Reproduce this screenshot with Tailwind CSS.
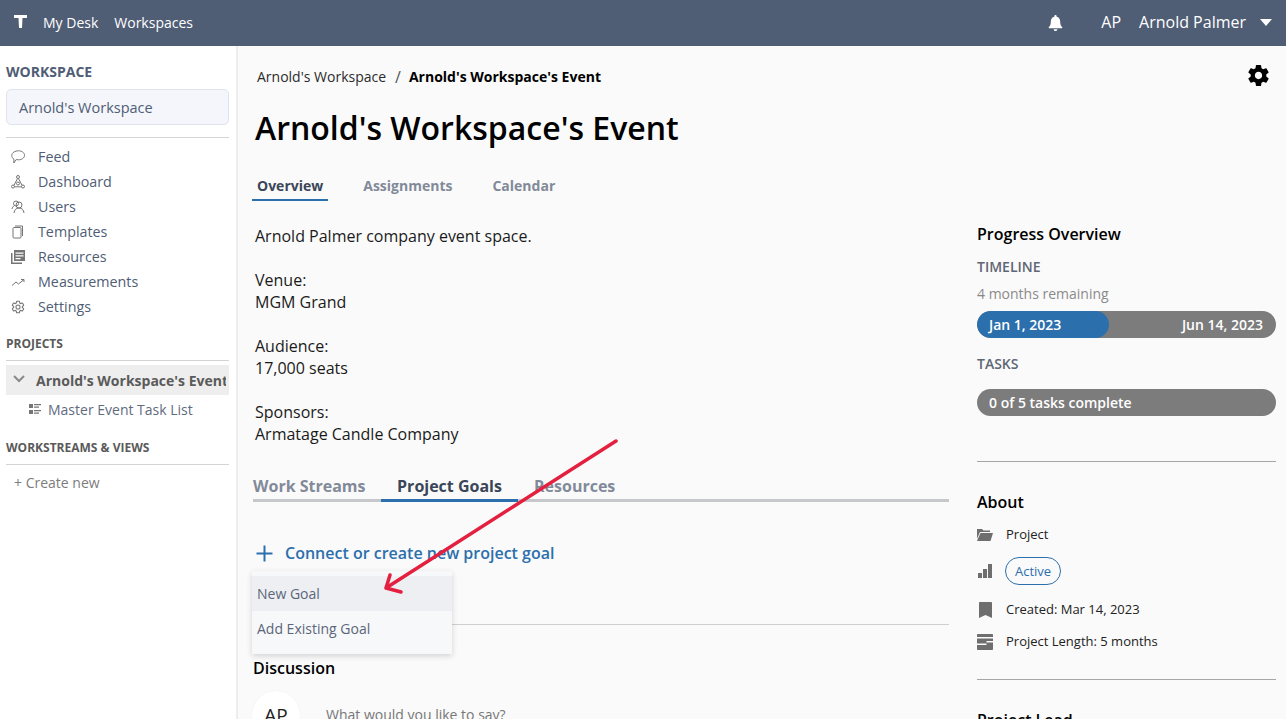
<!doctype html>
<html>
<head>
<meta charset="utf-8">
<title>Arnold's Workspace's Event</title>
<script src="https://cdn.jsdelivr.net/npm/@tailwindcss/browser@4"></script>
</head>
<body class="h-[719px] overflow-hidden bg-[#fafafa] font-['Open_Sans',sans-serif] relative">
    <!-- Top bar -->
    <header class="h-[46px] pb-[2px] bg-[#4f5d75] flex items-center text-white text-[14px]">
        <svg class="ml-[14px] mr-[16px] mt-[-1px]" width="13" height="13" viewBox="0 0 13 13" fill="#fff"><path d="M0 0h13v3H8.500l-.5 10H5L4.500 3H0z"/></svg>
        <a class="mr-4">My Desk</a>
        <a>Workspaces</a>
        <svg class="ml-auto mt-[2px]" width="15" height="17" viewBox="0 0 16 18" fill="#fff"><path d="M8 0c-.7 0-1.200.5-1.200 1.200v.6C4.300 2.300 3 4.300 3 6.800c0 3.600-1 4.800-2.200 6.200-.3.400 0 1 .5 1h13.400c.5 0 .8-.6.500-1C14 11.600 13 10.400 13 6.800c0-2.500-1.300-4.500-3.800-5v-.6C9.200.500 8.700 0 8 0zM6 15c0 1.100.9 2 2 2s2-.9 2-2z"/></svg>
        <span class="ml-[38px] text-[16px]">AP</span>
        <span class="ml-[18px] text-[16px]">Arnold Palmer</span>
        <svg class="ml-[14px] mr-[14px]" width="12" height="7" viewBox="0 0 14 8" fill="#fff"><path d="M0 0h14L7 8z"/></svg>
    </header>

    <div class="flex h-[673px]">
        <!-- Sidebar -->
        <aside class="w-[238px] shrink-0 bg-white border-r-2 border-[#eeeeee] pl-[6px] pr-[7px] text-[14.3px] text-[#4f5d75]">
            <div class="mt-[16px] text-[14px] leading-[19px] font-bold">WORKSPACE</div>
            <div class="mt-[8px] h-[36px] pt-[1px] border border-[#dfe3f0] bg-[#f5f6fb] rounded-[5px] pl-[12px] flex items-center text-[14.5px]">Arnold's Workspace</div>
            <div class="mt-[12px] border-t border-[#d4d4d8] pt-[6px]">
                <div class="flex items-center h-[25px] pl-[5px]">
                    <svg class="w-[14px] h-[14px] mr-[13px]" viewBox="0 0 14 14" fill="none" stroke="#757575"><path d="M7.500 .8c3.300 0 6 1.900 6 4.500s-2.700 4.500-6 4.500c-.8 0-1.500-.1-2.200-.3L2.800 13l.2-3.700C1.400 8.400.8 7 .8 5.300.8 2.700 4.200.8 7.500.8z"/></svg>
                    Feed
                </div>
                <div class="flex items-center h-[25px] pl-[5px]">
                    <svg class="w-[14px] h-[14px] mr-[13px]" viewBox="0 0 14 14" fill="none" stroke="#757575"><circle cx="7" cy="2" r="1.500"/><circle cx="2" cy="11.500" r="1.500"/><circle cx="12" cy="11.500" r="1.500"/><circle cx="7" cy="8.500" r="1.500"/><path d="M6.500 3.500 3 10.300M7.500 3.500l3.500 6.800M3.500 11.800h7"/></svg>
                    Dashboard
                </div>
                <div class="flex items-center h-[25px] pl-[5px]">
                    <svg class="w-[14px] h-[14px] mr-[13px]" viewBox="0 0 14 14" fill="none" stroke="#757575"><circle cx="8" cy="5" r="3"/><circle cx="5" cy="3.500" r="2.500"/><path d="M3 13c.3-3 2-5 5-5s4.700 2 5 5M1 9c.3-1.500 1-2.500 2-3"/></svg>
                    Users
                </div>
                <div class="flex items-center h-[25px] pl-[5px]">
                    <svg class="w-[14px] h-[14px] mr-[13px]" viewBox="0 0 14 14" fill="none" stroke="#757575"><rect x="2" y="2.500" width="8" height="10.500" rx="1"/><path d="M4 1h7.500v10"/></svg>
                    Templates
                </div>
                <div class="flex items-center h-[25px] pl-[5px]">
                    <svg class="w-[14px] h-[14px] mr-[13px]" viewBox="0 0 14 14" fill="#757575"><path d="M3 0h11v11H3zm1.500 2.500v1.200h8V2.500zm0 2.800v1.200h8V5.300zm0 2.700v1.200h5V8z" fill-rule="evenodd"/><path d="M0 3h1.500v9.500H11V14H0z"/></svg>
                    Resources
                </div>
                <div class="flex items-center h-[25px] pl-[5px]">
                    <svg class="w-[14px] h-[14px] mr-[13px]" viewBox="0 0 14 14" fill="none" stroke="#757575"><path d="M1 10.500 5 7l2.500 2L13 4.500M10 4.500h3V7"/></svg>
                    Measurements
                </div>
                <div class="flex items-center h-[25px] pl-[5px]">
                    <svg class="w-[14px] h-[14px] mr-[13px]" viewBox="0 0 24 24" fill="none" stroke="#757575" stroke-width="1.800"><path d="M19.430 12.980c.04-.32.07-.64.07-.98s-.03-.66-.07-.98l2.110-1.650c.19-.15.240-.42.120-.64l-2-3.460c-.12-.22-.39-.3-.61-.22l-2.490 1c-.52-.4-1.080-.73-1.690-.98l-.38-2.650C14.460 2.180 14.250 2 14 2h-4c-.25 0-.46.18-.49.42l-.38 2.650c-.61.25-1.170.59-1.690.98l-2.490-1c-.23-.09-.49 0-.61.22l-2 3.460c-.13.220-.07.490.12.640l2.110 1.650c-.04.320-.07.650-.07.980s.03.660.07.980l-2.110 1.650c-.19.150-.240.420-.12.640l2 3.460c.12.220.39.300.61.220l2.490-1c.52.400 1.080.730 1.690.980l.38 2.650c.03.240.240.420.490.420h4c.25 0 .46-.18.490-.42l.38-2.650c.61-.25 1.170-.59 1.690-.98l2.490 1c.23.090.49 0 .61-.22l2-3.460c.12-.22.070-.49-.12-.64z"/><circle cx="12" cy="12" r="3.500"/></svg>
                    Settings
                </div>
            </div>

            <div class="mt-[16px] text-[12px] leading-[17px] font-bold text-[#5a5a5a]">PROJECTS</div>
            <div class="mt-[8px] border-t border-[#d4d4d8] pt-[4px]">
                <div class="h-[30px] bg-[#eeeeee] flex items-center pl-[7px] pr-[3px] text-[14px] font-bold text-[#5a5a5a] whitespace-nowrap">
                    <svg class="w-[12px] h-[8px] mr-[11px] shrink-0 -mt-[2px]" viewBox="0 0 12 8" fill="none" stroke="#8a8a8a" stroke-width="2"><path d="m1 1 5 5 5-5"/></svg>
                    <span class="overflow-hidden">Arnold's Workspace's Event</span>
                </div>
                <div class="h-[29px] flex items-center pl-[23px] text-[14px] text-[#5f6b7f]">
                    <svg class="w-[12px] h-[11px] mr-[7px]" viewBox="0 0 12 11" fill="#757575"><path d="M0 0h4v4H0zm5 0h7v1.200H5zm0 2.500h5v1.200H5zM0 6h4v4H0zm5 0h7v1.200H5zm0 2.500h5v1.200H5z"/></svg>
                    Master Event Task List
                </div>
            </div>

            <div class="mt-[15px] text-[12px] leading-[17px] font-bold text-[#5a5a5a]">WORKSTREAMS &amp; VIEWS</div>
            <div class="mt-[8px] border-t border-[#d4d4d8] pt-[8px] pl-[8px] text-[14px] text-[#7d7d7d] leading-[20px]">+ Create new</div>
        </aside>

        <!-- Main -->
        <main class="flex-1 min-w-0 relative pl-[15px]">
            <div class="flex items-center pl-[4px] pt-[21px] text-[14px] leading-[20px] text-[#2b2b2b]">
                <span>Arnold's Workspace</span>
                <span class="ml-[9px] mr-[8px] text-[16px] text-[#555]">/</span>
                <span class="font-bold text-black">Arnold's Workspace's Event</span>
                <svg class="ml-auto mr-[15px] -mt-[7px] -mb-[3px]" width="25" height="25" viewBox="0 0 24 24" fill="#000"><path d="M19.430 12.980c.04-.32.07-.64.07-.98s-.03-.66-.07-.98l2.110-1.650c.19-.15.240-.42.120-.64l-2-3.460c-.12-.22-.39-.3-.61-.22l-2.490 1c-.52-.4-1.080-.73-1.690-.98l-.38-2.650C14.460 2.180 14.250 2 14 2h-4c-.25 0-.46.18-.49.42l-.38 2.650c-.61.25-1.170.59-1.690.98l-2.490-1c-.23-.09-.49 0-.61.22l-2 3.460c-.13.220-.07.490.12.640l2.110 1.650c-.04.320-.07.650-.07.980s.03.660.07.980l-2.110 1.650c-.19.150-.240.420-.12.640l2 3.460c.12.220.39.300.61.220l2.490-1c.52.400 1.080.730 1.690.980l.38 2.650c.03.240.240.420.490.420h4c.25 0 .46-.18.490-.42l.38-2.650c.61-.25 1.170-.59 1.690-.98l2.490 1c.23.090.49 0 .61-.22l2-3.460c.12-.22.070-.49-.12-.64zM12 15.500c-1.930 0-3.500-1.570-3.500-3.500s1.570-3.500 3.500-3.500 3.500 1.570 3.500 3.500-1.570 3.500-3.500 3.500z"/></svg>
            </div>
            <h1 class="mt-[19px] pl-[2px] text-[32px] leading-[44px] font-semibold text-black">Arnold's Workspace's Event</h1>

            <div class="mt-[26px] -ml-[1px] flex text-[14px] font-bold text-[#828a99] leading-[20px]">
                <div class="px-[5px] pb-[3px] border-b-2 border-[#2c6fad] text-[#3a4658]">Overview</div>
                <div class="ml-[35px]">Assignments</div>
                <div class="ml-[40px]">Calendar</div>
            </div>

            <div class="flex mt-[24px]">
                <div class="w-[696px] shrink-0">
                    <div class="pl-[2px] text-[16px] leading-[22px] text-[#1a1a1a]">
                        <p>Arnold Palmer company event space.</p>
                        <p class="mt-[22px]">Venue:<br>MGM Grand</p>
                        <p class="mt-[22px]">Audience:<br>17,000 seats</p>
                        <p class="mt-[22px]">Sponsors:<br>Armatage Candle Company</p>
                    </div>

                    <div class="mt-[26px] flex h-[31px] border-b-[3px] border-[#c6c8cc] text-[16px] font-bold text-[#828a99] leading-[30px]">
                        <div class="w-[128px]">Work Streams</div>
                        <div class="w-[137px] h-[31px] border-b-[3px] border-[#2c6fad] text-center text-[#3a4658]">Project Goals</div>
                        <div class="ml-[16px]">Resources</div>
                    </div>

                    <div class="mt-[39px] flex items-center pl-[3px] h-[24px] text-[16px] font-semibold text-[#2c6fad]">
                        <svg class="mr-[12px]" width="17" height="17" viewBox="0 0 17 17" fill="none" stroke="#2c6fad" stroke-width="2"><path d="M8.500 .5v16M.5 8.500h16"/></svg>
                        Connect or create new project goal
                    </div>

                    <div class="mt-[59px] border-t border-[#cfcfcf]"></div>
                    <div class="mt-[32px] text-[16px] leading-[22px] font-semibold text-black">Discussion</div>
                    <div class="mt-[12px] -ml-[1px] flex items-center">
                        <div class="w-[48px] h-[48px] shrink-0 rounded-full bg-white shadow-[0_0_2px_rgba(0,0,0,0.06)] flex items-center justify-center text-[19px] text-[#222]">AP</div>
                        <span class="ml-[26px] text-[14px] text-[#777] -mt-[2px]">What would you like to say?</span>
                    </div>
                </div>

                <!-- Right column -->
                <div class="ml-[28px] w-[299px] shrink-0 -mt-[2px]">
                    <div class="text-[16px] leading-[22px] font-semibold text-black">Progress Overview</div>
                    <div class="mt-[12px] text-[14px] leading-[20px] font-semibold text-[#5e6675]">TIMELINE</div>
                    <div class="mt-[7px] text-[14px] leading-[20px] text-[#8a8a8a]">4 months remaining</div>
                    <div class="mt-[7px] h-[27px] rounded-full bg-[#7c7c7c] relative flex items-center justify-end pr-[13px] text-[14px] font-semibold text-white overflow-hidden">
                        <div class="absolute left-0 top-0 h-full w-[132px] rounded-full bg-[#2c6fad] pl-[12px] leading-[27px]">Jan 1, 2023</div>
                        Jun 14, 2023
                    </div>
                    <div class="mt-[16px] text-[14px] leading-[20px] font-semibold text-[#5e6675]">TASKS</div>
                    <div class="mt-[15px] h-[27px] rounded-full bg-[#7c7c7c] pl-[12px] leading-[27px] text-[14px] font-semibold text-white">0 of 5 tasks complete</div>
                    <div class="mt-[45px] border-t border-[#a6a6a6]"></div>

                    <div class="mt-[29px] text-[16px] leading-[22px] font-semibold text-black">About</div>
                    <div class="mt-[11px] flex items-center h-[22px] text-[13px] text-[#222]">
                        <svg class="mr-[13px]" width="16" height="14" viewBox="0 0 16 14" fill="#6e6e6e"><path d="M0 1h5l1.500 1.500H13V4H3L0 11zM3.500 5H16l-2.500 8H0z"/></svg>
                        Project
                    </div>
                    <div class="mt-[11px] flex items-center h-[28px] text-[13px]">
                        <svg class="ml-[1px] mr-[13px]" width="14" height="14" viewBox="0 0 14 14" fill="#6e6e6e"><path d="M0 9h4v5H0zm5-4h4v9H5zM10 0h4v14h-4z"/></svg>
                        <span class="h-[28px] px-[9px] rounded-full border border-[#2c6fad] text-[#2c6fad] leading-[26px]">Active</span>
                    </div>
                    <div class="mt-[14px] flex items-center h-[22px] text-[13px] text-[#222]">
                        <svg class="mr-[14px] ml-[2px]" width="13" height="16" viewBox="0 0 13 16" fill="#6e6e6e"><path d="M0 1c0-.6.4-1 1-1h11c.6 0 1 .4 1 1v15l-6.500-3L0 16z"/></svg>
                        Created: Mar 14, 2023
                    </div>
                    <div class="mt-[10px] flex items-center h-[22px] text-[13px] text-[#222]">
                        <svg class="mr-[13px]" width="16" height="16" viewBox="0 0 16 16" fill="#6e6e6e"><path d="M1 0h14c.6 0 1 .4 1 1v2H0V1c0-.6.4-1 1-1zM0 4.500h16V7H9.500v1.500H16V15c0 .6-.4 1-1 1H1c-.6 0-1-.4-1-1v-4h9.500V9.500H0z"/></svg>
                        Project Length: 5 months
                    </div>
                    <div class="mt-[26px] border-t border-[#a6a6a6]"></div>
                    <div class="mt-[29px] text-[16px] leading-[22px] font-semibold text-black">Project Lead</div>
                </div>
            </div>

            <!-- Dropdown -->
            <div class="absolute left-[14px] top-[525px] w-[200px] h-[83px] bg-[#f7f8fa] shadow-[0_2px_6px_rgba(0,0,0,0.16)] pt-[5px] text-[14px] text-[#5b667a]">
                <div class="h-[35px] bg-[#eeeff3] pl-[5px] leading-[35px]">New Goal</div>
                <div class="h-[35px] pl-[5px] leading-[35px]">Add Existing Goal</div>
            </div>
        </main>
    </div>

    <!-- Annotation arrow -->
    <svg class="absolute left-0 top-0 pointer-events-none" width="1286" height="719" fill="none" stroke="#e3203f" stroke-width="3.500" stroke-linecap="round" stroke-linejoin="round">
        <path d="M616 441 386 588M401 592l-15-4 4-13"/>
    </svg>
</body>
</html>
